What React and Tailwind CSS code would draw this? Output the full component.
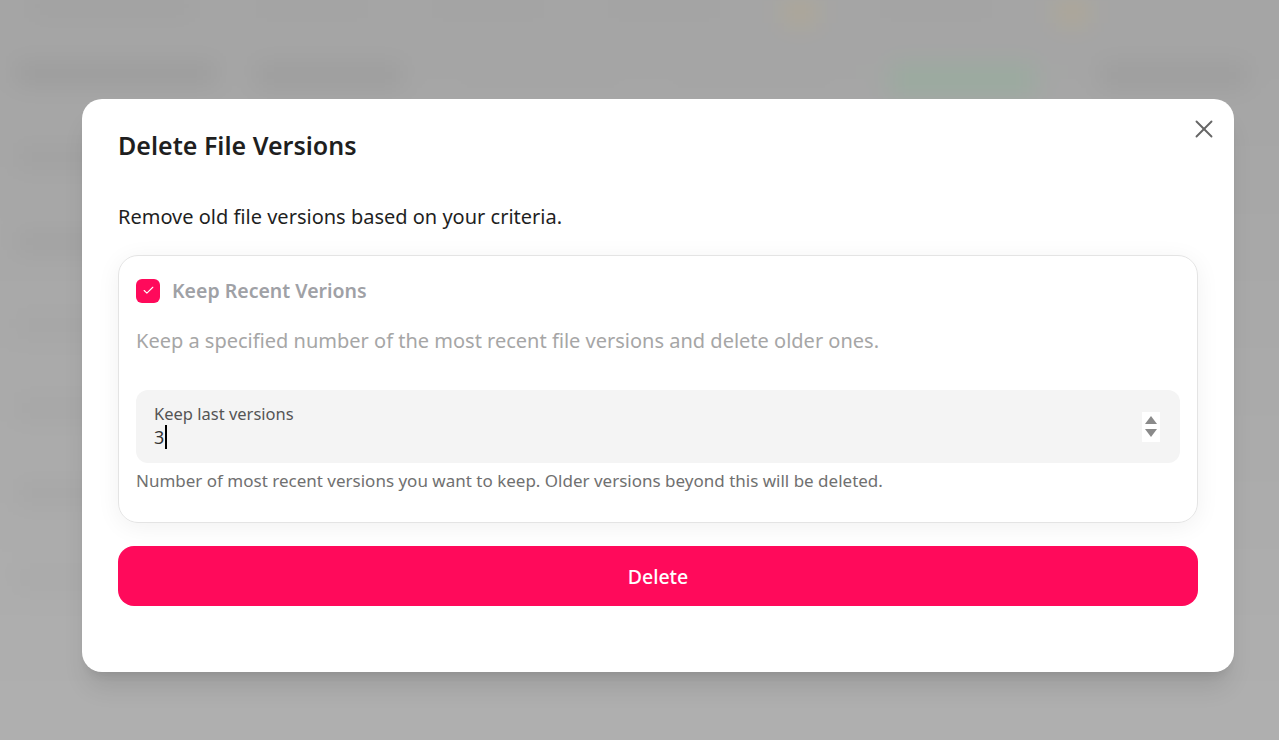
import { Check, X } from 'lucide-react';

const font = { fontFamily: '"Noto Sans", "Open Sans", Arial, sans-serif' };

function Backdrop() {
  // blurred app behind the dialog
  return (
    <div className="absolute -inset-8 overflow-hidden bg-gradient-to-b from-[#a4a4a4] to-[#b0b0b0] blur-[12px]">
      <div className="h-[72px] bg-[#a5a5a5] flex gap-16 pl-16 pr-10 pt-8 items-start">
        <div className="w-40 h-3 bg-[#9f9f9f]" />
        <div className="w-28 h-3 bg-[#a2a2a2]" />
        <div className="w-28 h-3 bg-[#a2a2a2]" />
        <div className="w-28 h-3 bg-[#a2a2a2]" />
        <div className="w-8 h-6 bg-[#b0a894]" />
        <div className="w-28 h-3 bg-[#a2a2a2]" />
        <div className="w-8 h-6 bg-[#b0a894]" />
      </div>
      <div className="flex pl-12 pt-6 gap-10">
        <div className="w-[200px] flex flex-col gap-16">
          <div className="h-5 bg-[#9b9b9b]" />
          <div className="h-5 bg-[#a1a1a1]" />
          <div className="h-5 bg-[#a1a1a1]" />
          <div className="h-5 bg-[#a6a6a6]" />
          <div className="h-5 bg-[#a6a6a6]" />
          <div className="h-5 bg-[#a6a6a6]" />
          <div className="h-5 bg-[#a9a9a9]" />
        </div>
        <div className="flex-1 grid grid-cols-5 gap-16 pr-16">
          <div className="h-6 bg-[#9d9d9d]" />
          <div className="h-6 bg-[#a5a5a5]" />
          <div className="h-6 bg-[#a5a5a5]" />
          <div className="h-8 bg-[#9aab9f]" />
          <div className="h-6 bg-[#9d9d9d]" />
        </div>
      </div>
    </div>
  );
}

export default function App() {
  return (
    <div className="relative w-[1279px] h-[740px] overflow-hidden" style={font}>
      <Backdrop />
      <div className="absolute inset-0 flex items-start pl-[82px] pt-[99px]">
        <div className="relative w-[1152px] h-[573px] bg-white rounded-[20px] shadow-xl px-9 pt-[28px]">
          <button className="absolute right-[15px] top-[15px] text-[#666] p-0">
            <X size={30} strokeWidth={1.5} />
          </button>
          <h2 className="text-[25px] font-semibold text-[#1f1f1f] leading-[36px]">Delete File Versions</h2>
          <p className="mt-[40px] text-[20px] text-[#1f1f1f] leading-[28px]">Remove old file versions based on your criteria.</p>

          <div className="mt-[24px] rounded-[20px] border border-[#e4e4e4] shadow-[0_4px_24px_rgba(0,0,0,0.06)] px-[17px] pt-[20px] pb-[29px]">
            <div className="flex items-center gap-3">
              <div className="w-6 h-6 rounded-[6px] bg-[#ff0a5b] flex items-center justify-center text-white">
                <Check size={13} strokeWidth={2} />
              </div>
              <span className="text-[19.5px] font-semibold text-[#9fa1a6]">Keep Recent Verions</span>
            </div>
            <p className="mt-[22px] text-[20px] text-[#a6a6a6] leading-[28px]">
              Keep a specified number of the most recent file versions and delete older ones.
            </p>
            <div className="mt-[35px] h-[73px] rounded-[12px] bg-[#f4f4f4] flex items-center pl-[18px] pr-[20px]">
              <div className="flex-1 flex flex-col leading-tight">
                <span className="text-[16.5px] text-[#555]">Keep last versions</span>
                <span className="text-[18px] text-[#333] flex items-center">
                  3<span className="w-[2px] h-[24px] bg-black ml-[1px]" />
                </span>
              </div>
              <div className="w-[18px] h-[30px] bg-white flex flex-col items-center justify-center gap-[5px]">
                <svg width="12" height="8" viewBox="0 0 12 8"><path d="M6 0 L12 8 L0 8 Z" fill="#8a8a8a" /></svg>
                <svg width="12" height="8" viewBox="0 0 12 8"><path d="M0 0 L12 0 L6 8 Z" fill="#8a8a8a" /></svg>
              </div>
            </div>
            <p className="mt-[6px] text-[17px] text-[#707070] leading-[24px]">
              Number of most recent versions you want to keep. Older versions beyond this will be deleted.
            </p>
          </div>

          <button className="mt-[23px] w-full h-[60px] rounded-[16px] bg-[#ff0a5b] text-white text-[19.5px] font-medium">
            Delete
          </button>
        </div>
      </div>
    </div>
  );
}
